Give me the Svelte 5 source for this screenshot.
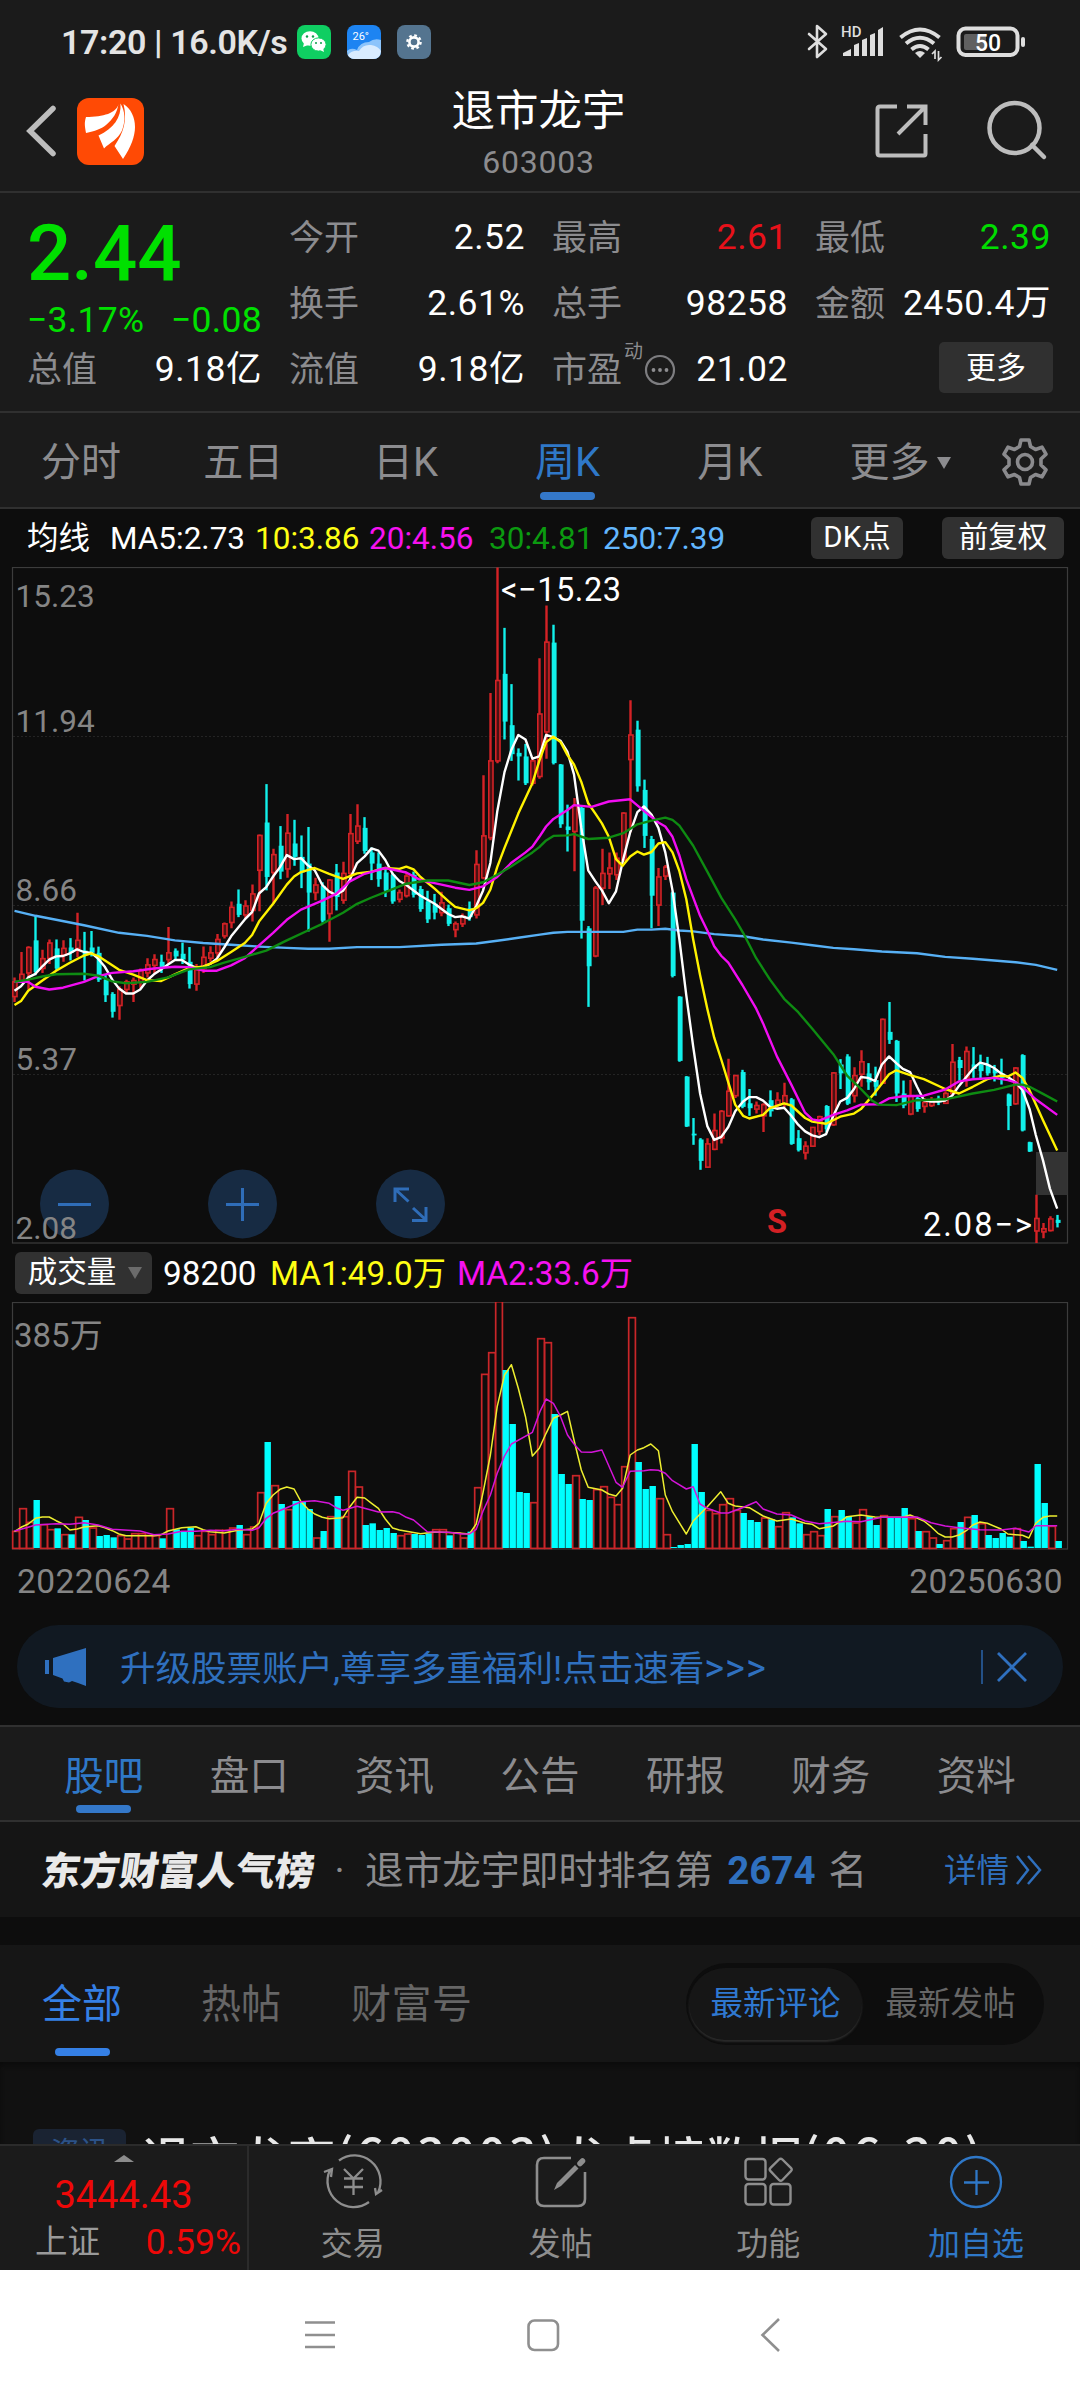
<script lang="ts">
  // Weekly candles: [high, body top, body bottom, low, rising]
  const candles: number[][] = [
    [935,945,978,990,1],[878,928,942,942,1],[865,868,925,962,1],[797,852,923,930,0],[873,893,915,925,1],
    [850,858,892,905,1],[850,870,915,920,0],[852,870,885,900,1],[847,868,880,897,0],[790,852,870,890,1],
    [833,875,885,942,0],[831,868,880,888,0],[866,880,940,945,0],[930,940,975,990,0],[968,972,1012,1025,0],
    [955,962,998,1030,1],[940,945,962,970,1],[935,942,950,990,1],[915,920,945,960,1],[892,907,925,935,1],
    [883,895,908,925,1],[884,900,912,925,0],[822,880,895,905,1],[870,875,888,897,0],[857,882,895,905,0],
    [867,900,950,960,0],[905,918,950,965,1],[866,890,915,925,1],[865,880,892,900,1],[838,850,880,890,1],
    [812,815,842,848,1],[765,778,812,825,1],[738,770,795,800,0],[762,775,795,802,1],[727,748,785,810,1],
    [615,617,695,787,1],[502,588,710,740,0],[647,660,700,770,1],[596,640,698,715,0],[569,612,692,712,1],
    [582,635,665,685,0],[617,665,700,735,0],[598,680,745,832,0],[712,728,745,762,1],[722,730,808,812,0],
    [715,717,792,855,1],[681,700,755,785,0],[676,702,762,770,1],[569,613,702,712,1],[547,596,630,636,1],
    [576,600,652,658,0],[644,655,680,717,0],[655,680,715,732,0],[693,700,740,755,0],[700,705,765,770,0],
    [738,745,760,767,1],[700,708,752,756,1],[698,705,750,756,0],[730,737,782,788,0],[741,765,805,813,0],
    [748,770,790,805,0],[743,768,790,798,1],[772,780,815,820,0],[810,815,828,845,1],[792,798,815,822,1],
    [765,780,800,808,0],[650,682,795,803,1],[482,618,712,715,1],[298,450,622,628,1],[17,270,450,455,1],
    [152,255,362,402,0],[278,370,435,450,0],[422,432,440,494,0],[412,440,500,504,0],[445,450,500,505,1],
    [220,345,485,490,1],[102,184,385,445,1],[145,185,455,458,0],[457,458,592,600,0],[548,597,605,653,0],
    [533,550,608,697,1],[552,555,808,848,0],[820,825,910,1001,0],[730,735,887,890,1],[647,702,735,773,1],
    [655,690,703,737,1],[655,668,705,717,1],[565,567,672,675,1],[314,392,447,610,1],[360,380,507,519,0],
    [492,515,618,645,0],[618,625,752,825,0],[690,710,773,820,1],[683,688,708,717,1],[743,745,932,935,0],
    [977,978,1122,1124,0],[1156,1157,1269,1270,0],[1250,1285,1289,1310,0],[1295,1298,1346,1366,0],[1295,1308,1360,1362,1],
    [1240,1278,1320,1322,1],[1232,1235,1295,1307,1],[1117,1190,1245,1247,1],[1153,1155,1200,1205,1],[1142,1147,1225,1228,0],
    [1185,1217,1228,1245,0],[1213,1222,1230,1240,1],[1217,1220,1245,1281,1],[1188,1210,1235,1247,0],[1192,1210,1220,1228,1],
    [1171,1200,1218,1225,1],[1205,1208,1308,1310,0],[1277,1295,1322,1325,0],[1302,1313,1328,1343,1],[1270,1271,1313,1315,1],
    [1245,1247,1280,1288,1],[1221,1223,1275,1282,0],[1147,1149,1265,1268,1],[1118,1130,1150,1185,0],[1107,1112,1218,1221,0],
    [1136,1155,1200,1215,1],[1098,1124,1152,1180,1],[1127,1150,1170,1187,0],[1135,1165,1180,1200,0],[1027,1029,1172,1174,1],
    [990,1057,1075,1084,0],[1075,1077,1195,1214,0],[1166,1195,1222,1228,0],[1165,1200,1241,1244,1],[1198,1205,1230,1236,0],
    [1205,1215,1224,1238,1],[1203,1210,1222,1225,1],[1200,1205,1215,1221,0],[1190,1195,1217,1218,1],[1084,1125,1195,1200,1],
    [1113,1120,1138,1166,0],[1090,1101,1160,1180,1],[1091,1130,1140,1160,0],[1108,1130,1145,1163,0],[1113,1130,1150,1155,0],
    [1131,1140,1150,1168,0],[1117,1150,1160,1175,0],[1195,1197,1223,1277,0],[1136,1138,1218,1220,1],[1107,1109,1278,1280,0],
    [1303,1304,1325,1326,0],[1422,1475,1503,1530,1],[1485,1498,1505,1519,1],[1470,1476,1502,1504,1],[1467,1478,1485,1495,0],
  ];

  const volumes = [
    875,807,848,780,855,870,865,885,883,833,840,865,888,885,892,888,898,882,882,887,888,895,807,868,875,
    863,888,875,885,872,872,865,855,885,862,759,606,738,792,810,783,785,807,895,873,831,768,831,695,742,
    855,850,870,864,879,888,883,882,885,880,870,870,886,880,895,875,744,404,339,186,390,552,756,759,789,
    297,309,522,702,732,708,777,780,750,741,773,795,681,234,666,747,738,777,885,921,915,912,612,756,812,
    822,795,777,812,819,840,846,835,838,861,819,832,850,885,876,888,807,831,810,828,850,810,828,855,828,
    831,834,804,837,873,876,895,912,903,867,846,833,825,852,885,894,879,890,867,903,920,672,789,860,903,
  ];
  // Weeks whose volume bar is coloured against the candle body
  const flipped = new Set([11, 60, 106, 138, 146, 147]);

  const maLines = [
    { cls: 'blue', pts: '42,786 103,797 163,806 244,818 346,835 427,842 508,852 590,858 671,862 752,866 833,869 894,871 956,871 1037,867 1160,867 1282,862 1383,859 1444,853 1505,846 1568,839 1607,835 1648,833 1810,833 1851,828 1892,828 1932,826 1973,830 2013,832 2074,838 2158,843 2216,850 2298,857 2359,863 2420,869 2480,872 2561,877 2663,881 2745,889 2825,893 2949,901 3008,907 3070,918' },
    { cls: 'white', pts: '42,965 61,955 82,935 103,927 123,910 143,895 163,888 183,887 203,881 224,872 244,878 265,880 285,893 305,912 326,940 346,960 366,971 387,971 407,962 427,942 447,928 468,917 488,906 508,896 528,896 549,906 569,913 590,911 610,905 630,893 651,868 671,843 711,805 732,789 752,747 773,733 793,709 813,688 833,661 854,670 874,668 894,684 914,695 936,728 956,743 976,750 996,741 1016,716 1037,679 1059,664 1079,646 1099,651 1119,672 1140,703 1160,719 1180,728 1221,752 1262,770 1302,793 1322,800 1342,798 1363,803 1383,775 1403,740 1424,678 1444,564 1465,475 1485,425 1505,392 1526,402 1546,445 1566,440 1586,392 1607,397 1628,405 1648,430 1667,480 1688,600 1708,695 1729,720 1748,740 1768,769 1789,742 1810,670 1830,610 1851,565 1870,552 1892,570 1912,600 1932,655 1953,740 1973,850 1993,975 2013,1090 2033,1195 2054,1268 2074,1299 2095,1292 2115,1270 2135,1235 2158,1213 2176,1203 2196,1203 2216,1211 2236,1225 2256,1229 2277,1227 2298,1245 2318,1265 2338,1280 2359,1289 2379,1293 2399,1286 2420,1245 2440,1213 2460,1205 2480,1185 2500,1158 2521,1160 2541,1167 2561,1130 2582,1112 2603,1127 2622,1140 2643,1147 2663,1180 2683,1210 2704,1213 2724,1213 2745,1211 2765,1200 2785,1178 2806,1158 2825,1140 2846,1126 2867,1130 2887,1138 2907,1150 2927,1158 2949,1170 2969,1187 2990,1230 3008,1288 3029,1345 3049,1408 3070,1453' },
    { cls: 'yellow', pts: '42,997 61,988 82,965 123,942 163,920 203,902 244,886 265,881 285,887 305,897 346,918 387,929 427,941 468,943 508,928 549,914 590,911 630,898 671,878 711,858 732,840 752,810 793,770 833,727 854,709 874,699 914,690 956,703 996,714 1037,702 1079,698 1119,690 1160,692 1180,687 1201,693 1221,710 1262,736 1302,764 1322,777 1363,785 1383,780 1403,768 1424,738 1444,688 1465,645 1505,568 1546,500 1566,450 1586,408 1607,396 1628,408 1648,437 1667,458 1688,497 1708,545 1729,568 1748,590 1768,620 1789,670 1808,685 1830,664 1851,653 1870,660 1892,654 1912,635 1932,632 1953,655 1973,697 1993,760 2013,850 2033,930 2054,1005 2074,1070 2095,1120 2115,1170 2135,1220 2158,1245 2176,1251 2216,1243 2236,1228 2277,1217 2298,1222 2338,1250 2359,1258 2399,1263 2440,1247 2480,1240 2500,1230 2541,1193 2582,1152 2603,1143 2643,1154 2683,1163 2745,1185 2785,1195 2825,1180 2867,1163 2907,1155 2927,1157 2949,1148 2969,1160 2990,1188 3029,1255 3070,1323' },
    { cls: 'magenta', pts: '42,945 82,945 103,956 143,962 183,958 244,945 285,932 326,925 387,921 447,915 508,911 549,912 590,920 630,920 671,908 711,892 752,863 793,835 833,806 874,783 936,763 976,748 1016,720 1059,703 1119,690 1180,700 1221,717 1282,727 1322,734 1363,739 1403,731 1444,710 1485,678 1526,655 1546,642 1566,620 1586,597 1607,580 1648,560 1667,549 1718,553 1768,541 1830,536 1870,562 1912,588 1932,597 1953,620 1973,662 1993,715 2033,797 2054,830 2074,865 2095,887 2115,902 2156,952 2196,1005 2216,1038 2256,1112 2298,1175 2338,1238 2359,1253 2379,1256 2420,1243 2460,1233 2500,1220 2551,1219 2582,1206 2622,1201 2683,1200 2745,1186 2785,1168 2825,1163 2887,1160 2927,1165 2949,1170 2969,1180 3008,1208 3070,1243' },
    { cls: 'green', pts: '42,945 82,940 123,933 163,928 244,927 285,931 326,944 366,948 427,945 488,935 549,917 610,912 651,902 711,889 773,875 833,852 894,830 936,815 996,790 1037,770 1079,756 1119,744 1180,725 1241,718 1302,718 1363,728 1403,722 1444,705 1485,686 1546,655 1566,643 1586,628 1607,618 1648,617 1667,614 1708,625 1768,622 1810,612 1851,592 1892,584 1932,577 1953,582 1973,595 2013,640 2054,698 2095,757 2135,805 2158,835 2196,892 2236,940 2277,983 2318,1013 2359,1050 2420,1107 2460,1155 2500,1185 2531,1210 2551,1220 2603,1221 2663,1210 2745,1208 2825,1195 2887,1187 2949,1175 2969,1175 2990,1180 3029,1196 3070,1213' },
  ];

  const volLines = [
    { cls: 'vyellow', pts: '42,875 61,862 82,852 103,835 123,831 143,831 163,842 183,852 203,870 224,867 244,861 285,857 305,863 326,872 346,882 366,887 447,887 468,884 488,873 528,863 569,860 590,869 610,875 651,879 691,871 732,867 752,850 773,790 793,765 813,748 833,741 854,747 874,785 894,807 914,822 936,832 956,836 996,833 1016,800 1037,772 1059,774 1079,790 1099,805 1119,837 1140,864 1160,870 1221,881 1262,876 1322,878 1363,882 1383,852 1403,757 1424,645 1444,500 1465,405 1485,374 1505,445 1526,530 1546,648 1566,625 1586,580 1607,535 1628,525 1648,514 1667,600 1688,690 1708,742 1748,750 1768,762 1789,768 1808,745 1830,645 1851,630 1870,623 1890,612 1912,632 1932,765 1953,815 1993,882 2013,843 2054,800 2093,755 2115,790 2135,798 2176,803 2216,828 2256,843 2298,837 2338,850 2359,853 2379,866 2420,858 2440,845 2460,830 2500,825 2541,831 2622,832 2643,825 2683,843 2704,860 2724,880 2745,891 2765,891 2785,885 2806,872 2825,855 2846,846 2867,850 2907,867 2927,882 2969,886 2988,894 3008,850 3029,832 3049,828 3070,828' },
    { cls: 'vmagenta', pts: '42,873 82,862 103,855 163,851 203,853 244,848 285,855 326,868 407,873 447,884 488,882 528,874 569,874 610,871 651,872 691,868 732,871 752,863 773,835 793,820 833,803 874,785 914,782 956,790 976,803 996,811 1037,799 1099,816 1140,815 1160,820 1180,832 1201,840 1241,875 1302,877 1342,882 1363,882 1383,868 1403,813 1424,765 1444,700 1465,648 1485,612 1546,577 1568,515 1586,477 1607,490 1628,530 1648,585 1667,612 1688,636 1718,637 1748,630 1789,727 1808,742 1830,694 1870,692 1890,689 1912,691 1932,700 1953,722 1993,747 2013,740 2033,792 2054,805 2093,819 2115,819 2156,803 2196,785 2216,807 2256,822 2298,825 2338,843 2379,851 2460,844 2500,845 2561,832 2663,831 2704,848 2745,858 2785,863 2846,869 2907,870 2949,865 2988,876 3008,857 3070,857' },
  ];

  const xOf = (i: number) => 14.5 + i * 7;
  const yOf = (v: number) => 560 + v / 2.24;
  const yVol = (v: number) => 1240 + v / 3;
  const toPath = (pts: string, y: (v: number) => number) =>
    pts.split(' ').map((p) => {
      const [a, b] = p.split(',').map(Number);
      return `${(a / 2.904).toFixed(1)},${y(b).toFixed(1)}`;
    }).join(' ');

  const quotes = [
    ['今开', '2.52', ''], ['最高', '2.61', 'up'], ['最低', '2.39', 'down'],
    ['换手', '2.61%', ''], ['总手', '98258', ''], ['金额', '2450.4万', ''],
  ];
  const periods = ['分时', '五日', '日K', '周K', '月K'];
  const sections = ['股吧', '盘口', '资讯', '公告', '研报', '财务', '资料'];
</script>

<div class="screen">
  <div class="status">
    <span class="clock">17:20 | 16.0K/s</span>
    <svg class="apps" width="136" height="36" viewBox="0 0 136 36">
      <rect x="1" y="1" width="34" height="34" rx="8" fill="#0fce62" />
      <ellipse cx="14" cy="14.500" rx="8.500" ry="7.300" fill="#fff" />
      <path d="M8 19l-1 4 5-2z" fill="#fff" />
      <ellipse cx="22.500" cy="20.500" rx="7.600" ry="6.600" fill="#fff" stroke="#0fce62" stroke-width="1" />
      <path d="M24 26l4 2-1-4z" fill="#fff" />
      <g fill="#0a9d49"><circle cx="11" cy="12.500" r="1.200" /><circle cx="17" cy="12.500" r="1.200" /><circle cx="20" cy="19" r="1" /><circle cx="25" cy="19" r="1" /></g>
      <rect x="51" y="1" width="34" height="34" rx="8" fill="#1d84f2" />
      <path d="M51 27q4-4 10-1 3-8 12-8 5-4 12-2v11q0 8-8 8H59q-8 0-8-8z" fill="#8cc4fb" />
      <path d="M52 31q4-5 11-4 4-7 12-6 7 1 10 6-1 8-8 8H59q-5 0-7-4z" fill="#d9ecff" />
      <text x="56.500" y="16" font-size="11" fill="#fff">26°</text>
      <rect x="101" y="1" width="34" height="34" rx="8" fill="#54748f" />
      <g fill="none" stroke="#fff"><circle cx="118" cy="18" r="4.600" stroke-width="2.600" /><circle cx="118" cy="18" r="6.600" stroke-width="2.400" stroke-dasharray="2.700 2.480" /></g>
    </svg>
    <svg class="signals" width="222" height="40" viewBox="804 22 222 40">
      <path d="M809 34l17 15-9 8V26l9 8-17 15" fill="none" stroke="#dedede" stroke-width="2.600" stroke-linejoin="round" stroke-linecap="round" />
      <text x="841" y="37" font-size="15" font-weight="500" fill="#dedede">HD</text>
      <path d="M843 56v-3l8-4v7zM854 56V45l5-2v13zM862 56V40l5-2v18zM870 56V35l5-2v23zM878 56V30l5-3v29z" fill="#dedede" />
      <g fill="none" stroke="#dedede" stroke-width="4"><path d="M900.500 37.500q19.500-16 39 0" /><path d="M906 43.500q14-11.500 28 0" /><path d="M911.500 49.500q8.500-7 17 0" /></g>
      <path d="M915 53q5-4 10 0l-5 5z" fill="#dedede" />
      <path d="M932 54l3-3v8M938.500 51v9l3-3" fill="none" stroke="#dedede" stroke-width="1.700" />
      <rect x="958.500" y="28.500" width="59" height="26.500" rx="7" fill="none" stroke="#dedede" stroke-width="4" />
      <rect x="964" y="34" width="22" height="16" rx="2" fill="#606060" />
      <rect x="1021" y="37" width="4" height="10" rx="2" fill="#dedede" />
      <text x="975" y="50.500" font-size="23" font-weight="500" fill="#fff">50</text>
    </svg>
  </div>

  <header class="head">
    <svg class="back" width="120" height="76" viewBox="24 93 120 76">
      <path d="M53 108.500L30 131l23 22.500" fill="none" stroke="#bdbdbd" stroke-width="5.500" stroke-linecap="round" />
      <rect x="77" y="98" width="67" height="67" rx="12" fill="#ff4a05" />
      <path d="M118.500 104c-2 9-15 13-32.500 13-2 6-1 10 0 16 9-2 15-4 20-8 7-6 11-12 12.500-21z" fill="#fff" />
      <path d="M120.500 103.500c1 14-7 25-22 32l5.500 13c6-6 14-9 18-18 4-11 3-19-1.500-27z" fill="#fff" />
      <path d="M123.500 104c4 16 0 29-9 42l8.500 13c8-12 12-23 12-32 0-10-4-18-11.500-23z" fill="#fff" />
    </svg>
    <div class="title">
      <h1>退市龙宇</h1>
      <p>603003</p>
    </div>
    <svg class="tools" width="184" height="70" viewBox="868 96 184 70" fill="none" stroke="#bdbdbd" stroke-width="4.500">
      <path d="M897 106.500H880q-2.500 0-2.500 2.500v44q0 2.500 2.500 2.500h44q1.500 0 1.500-2V134M907 106.500h18.500V125M925 107l-27 27" stroke-width="4" />
      <circle cx="1014.500" cy="128" r="25" />
      <path d="M1032 145l12 12" stroke-linecap="round" />
    </svg>
  </header>

  <section class="quote">
    <div class="main">
      <div class="price">2.44</div>
      <div class="chg"><span>−3.17%</span><span>−0.08</span></div>
      <div class="cell"><span class="k">总值</span><span class="v">9.18亿</span></div>
    </div>
    <div class="grid">
      {#each quotes as [k, v, tone]}
        <div class="cell"><span class="k">{k}</span><span class="v {tone}">{v}</span></div>
      {/each}
      <div class="cell"><span class="k">流值</span><span class="v">9.18亿</span></div>
      <div class="cell pe">
        <span class="k">市盈</span><sup>动</sup>
        <svg width="32" height="32" viewBox="0 0 32 32"><circle cx="16" cy="16" r="14" fill="none" stroke="#7d7d80" stroke-width="2.200" /><g fill="#8d8d90"><circle cx="9.500" cy="16" r="1.900" /><circle cx="16" cy="16" r="1.900" /><circle cx="22.500" cy="16" r="1.900" /></g></svg>
        <span class="v">21.02</span>
      </div>
      <div class="cell end"><button class="more">更多</button></div>
    </div>
  </section>

  <nav class="periods">
    {#each periods as p}
      <span class="tab" class:on={p === '周K'}>{p}</span>
    {/each}
    <span class="tab dd">更多<i></i></span>
    <svg class="gear" width="50" height="50" viewBox="0 0 50 50" fill="none" stroke="#8a8a8d" stroke-width="3.600" stroke-linejoin="round">
      <path d="M21 3h8l1.500 6.500 5 3 6.500-2.300 4 7-5 4.800v6l5 4.800-4 7-6.500-2.300-5 3L29 47h-8l-1.500-6.500-5-3L8 39.800l-4-7L9 28v-6l-5-4.800 4-7 6.500 2.300 5-3z" />
      <circle cx="25" cy="25" r="7.500" />
    </svg>
  </nav>

  <div class="legend">
    <b class="l0">均线</b>
    <span class="l1">MA5:2.73</span>
    <span class="l2">10:3.86</span>
    <span class="l3">20:4.56</span>
    <span class="l4">30:4.81</span>
    <span class="l5">250:7.39</span>
    <button class="chip dk">DK点</button>
    <button class="chip">前复权</button>
  </div>

  <svg class="chart" width="1080" height="677" viewBox="0 567 1080 677">
    <g class="frame">
      <rect x="12.500" y="567.500" width="1055" height="675.500" />
      {#each [736.5, 905.5, 1074.5] as y}<line x1="13" x2="1067" y1={y} y2={y} stroke-dasharray="2 2" />{/each}
    </g>
    <rect x="1036" y="1152" width="31.500" height="43" fill="#333" />
    {#each candles as [h, t, b, l, up], i}
      {#if up}
        <path d="M{xOf(i)} {yOf(h)}V{yOf(t)}M{xOf(i)} {yOf(b)}V{yOf(l)}" stroke="#d42226" stroke-width="2.400" />
        <rect x={xOf(i) - 1.7} y={yOf(t)} width="4.200" height={Math.max(1.5, yOf(b) - yOf(t))} fill="#4b1113" stroke="#d42226" stroke-width="1.600" />
      {:else}
        <path d="M{xOf(i)} {yOf(h)}V{yOf(l)}" stroke="#12f0ea" stroke-width="2.400" />
        <rect x={xOf(i) - 1.8} y={yOf(t)} width="4.900" height={Math.max(1.5, yOf(b) - yOf(t))} fill="#12f0ea" />
      {/if}
    {/each}
    {#each maLines as m}
      <polyline class="ma {m.cls}" points={toPath(m.pts, yOf)} />
    {/each}
    <g class="mark">
      <text x="501" y="601" textLength="120">&lt;−15.23</text>
      <text x="923" y="1236" textLength="109">2.08−&gt;</text>
      <text class="sell" x="767" y="1233">S</text>
    </g>
    <g fill="#1e3f68" fill-opacity="0.600">
      <circle cx="74.500" cy="1204" r="34.500" /><circle cx="242.500" cy="1204" r="34.500" /><circle cx="410.500" cy="1204" r="34.500" />
    </g>
    <g fill="none" stroke="#2f6db8" stroke-width="3">
      <path d="M58 1204.500h33M226 1204.500h33M242.500 1188v33" />
      <path d="M395 1202v-13h14M395.500 1189.500l13 12M426 1207v13.500h-14M426 1220l-13-12" />
    </g>
    <g class="axis">
      <text x="15.500" y="607">15.23</text>
      <text x="15.500" y="731.500">11.94</text>
      <text x="15.500" y="901">8.66</text>
      <text x="15.500" y="1070">5.37</text>
      <text x="15.500" y="1239">2.08</text>
    </g>
  </svg>

  <div class="legend vol">
    <button class="chip pick">成交量<i></i></button>
    <span class="v0">98200</span>
    <span class="l2 v1">MA1:49.0万</span>
    <span class="l3">MA2:33.6万</span>
  </div>

  <svg class="chart" width="1080" height="248" viewBox="0 1302 1080 248">
    <g class="frame"><rect x="12.500" y="1302.500" width="1055" height="246.500" /></g>
    <text class="vlabel" x="14" y="1347">385万</text>
    {#each volumes as v, i}
      {#if !!candles[i][4] !== flipped.has(i)}
        <rect x={xOf(i) - 1.8} y={yVol(v) - 0.3} width="6.700" height={1548.7 - yVol(v)} fill="#0e0c0c" stroke="#c92629" stroke-width="1.700" />
      {:else}
        <rect x={xOf(i) - 2} y={yVol(v)} width="6.400" height={Math.max(1, 1548 - yVol(v))} fill="#00ffff" />
      {/if}
    {/each}
    {#each volLines as m}
      <polyline class="ma {m.cls}" points={toPath(m.pts, yVol)} />
    {/each}
  </svg>

  <div class="dates"><span>20220624</span><span>20250630</span></div>

  <div class="banner">
    <svg width="44" height="40" viewBox="0 0 44 40" fill="#2f70bf"><path d="M1 13h4v14H1zM9 11L42 1v38l-8-3-6-2-3 1.500-5-1-1.500-3L9 28z" /></svg>
    <span>升级股票账户,尊享多重福利!点击速看<b>&gt;&gt;&gt;</b></span>
    <svg class="close" width="50" height="40" viewBox="0 0 50 40" fill="none" stroke="#2f70bf"><path d="M3 3v34" stroke-width="1.300" /><path d="M19 6l28 28M47 6L19 34" stroke-width="2.800" /></svg>
  </div>

  <nav class="sections">
    {#each sections as s, i}
      <span class="tab" class:on={i === 0}>{s}</span>
    {/each}
  </nav>

  <div class="rank">
    <strong>东方财富人气榜</strong>
    <span class="dot">·</span>
    <span class="txt">退市龙宇即时排名第</span>
    <em>2674</em>
    <span class="txt">名</span>
    <span class="detail">详情</span>
    <svg width="28" height="32" viewBox="0 0 28 32" fill="none" stroke="#2f70bf" stroke-width="2.500"><path d="M2 2l11 14L2 30M13 2l12 14-12 14" /></svg>
  </div>

  <div class="forum">
    <span class="f on">全部</span>
    <span class="f f2">热帖</span>
    <span class="f f3">财富号</span>
    <div class="toggle"><span class="sel">最新评论</span><span>最新发帖</span></div>
  </div>

  <article class="post">
    <span class="tag">资讯</span>
    <h2>退市龙宇<span>(603003)</span>龙虎榜数据<span>(06-30)</span></h2>
  </article>

  <footer class="dock">
    <div class="index">
      <i></i>
      <div class="pt">3444.43</div>
      <div class="row"><span>上证</span><b>0.59%</b></div>
    </div>
    <div class="act">
      <svg width="64" height="56" viewBox="0 0 64 56" fill="none" stroke="#8e8e8e" stroke-width="2.300"><path d="M18 6.500A26 26 0 0 1 57 38.500M48 48A26 26 0 0 1 9 16M3 18l8-3-1 8M61 36l-6 4-1-6" /><path d="M23 15l9.500 9.500L42 15M23 24.500h19M23 33h19M32.500 24v17" /></svg>
      <span>交易</span>
    </div>
    <div class="act">
      <svg width="64" height="56" viewBox="0 0 64 56" fill="none" stroke="#8e8e8e" stroke-width="2.600"><path d="M42 4H15q-7 0-7 7v34q0 7 7 7h34q7 0 7-7V18" /><path d="M25 36l3-7L46 11l3.500 3.500L32 32z" fill="#8e8e8e" stroke="none" /><path d="M51 9.500l2.500-2.500" stroke-width="5.500" stroke-linecap="round" /></svg>
      <span>发帖</span>
    </div>
    <div class="act">
      <svg width="64" height="56" viewBox="0 0 64 56" fill="none" stroke="#8e8e8e" stroke-width="2.400"><rect x="9.500" y="5" width="20" height="20.500" rx="3" /><rect x="9.500" y="30" width="20" height="20.500" rx="3" /><rect x="34.500" y="30" width="20" height="20.500" rx="3" /><path d="M43 5.500q1.700-1.700 3.400 0l8.500 8.300q1.700 1.700 0 3.400L46.400 26q-1.700 1.700-3.400 0l-8.500-8.800q-1.700-1.700 0-3.400z" /></svg>
      <span>功能</span>
    </div>
    <div class="act add">
      <svg width="64" height="56" viewBox="0 0 64 56" fill="none" stroke="#2f78c8" stroke-width="2.300"><circle cx="32" cy="28" r="25" /><path d="M20 28.500h25M32.500 16v25" /></svg>
      <span>加自选</span>
    </div>
  </footer>

  <div class="sys">
    <svg width="480" height="36" viewBox="302 2317 480 36" fill="none" stroke="#8f8f8f" stroke-width="2.600">
      <path d="M305 2322.500h30M305 2335h30M305 2347h30" />
      <rect x="528.500" y="2320.500" width="29.500" height="29.500" rx="6" />
      <path d="M779 2319l-16.500 16 16.500 16" />
    </svg>
  </div>
</div>

<style>
  :global(body) { background: #0d0d0d; }
  .screen {
    width: 1080px; height: 2400px; overflow: hidden; display: flex; flex-direction: column;
    background: #0d0d0d; color: #fff; font-family: Roboto, "Noto Sans CJK SC", sans-serif; line-height: 1;
  }
  .screen > * { flex: none; box-sizing: border-box; }
  button { font: inherit; color: inherit; border: 0; padding: 0; margin: 0; }
  h1, h2, p { margin: 0; font-weight: 400; }
  svg { display: block; }

  .status { height: 84px; background: #1b1b1b; display: flex; align-items: center; padding: 0 54px 0 61px; }
  .clock { font-size: 34px; font-weight: 600; color: #e4e4e4; width: 235px; white-space: nowrap; letter-spacing: -0.400px; }
  .signals { margin-left: auto; }

  .head { height: 109px; background: #1b1b1b; border-bottom: 2px solid #303030; display: flex; justify-content: space-between; align-items: flex-start; padding: 9px 28px 0 24px; }
  .title { text-align: center; margin: -11px -65px 0 0; }
  .title h1 { font-size: 43.500px; line-height: 60px; }
  .title p { font-size: 32px; line-height: 36px; color: #8c8c8f; letter-spacing: 0.800px; padding-top: 2px; }
  .tools { margin-top: 3px; }

  .quote { height: 220px; background: #1b1b1b; border-bottom: 2px solid #303030; display: flex; gap: 27px; padding: 12px 29px 0 27px; }
  .main { width: 235px; display: flex; flex-direction: column; }
  .price { height: 98px; line-height: 98px; font-size: 78px; font-weight: 500; color: #00e000; }
  .chg { height: 34px; line-height: 34px; display: flex; justify-content: space-between; font-size: 35.500px; color: #00e000; letter-spacing: 0.300px; }
  .grid { flex: 1; display: grid; grid-template-columns: repeat(3, 1fr); column-gap: 27px; grid-auto-rows: 66px; }
  .cell { display: flex; align-items: center; justify-content: space-between; height: 66px; font-size: 35.500px; white-space: nowrap; }
  .v { letter-spacing: 0.500px; }
  .k { color: #8c8c8f; font-size: 35px; }
  .up { color: #e8111a; }
  .down { color: #00dd00; }
  .pe sup { font-size: 19px; line-height: 20px; color: #8c8c8f; align-self: flex-start; margin: 5px 1px 0 2px; }
  .pe .v { margin-left: auto; }
  .end { justify-content: flex-end; }
  .more { width: 114px; height: 51px; border-radius: 5px; background: #303030; font-size: 30px; margin: -5px -2px 0 0; }

  .periods { height: 96px; background: #1b1b1b; border-bottom: 2px solid #303030; display: flex; align-items: stretch; }
  .tab { width: 162.200px; display: flex; align-items: center; justify-content: center; font-size: 40px; color: #8c8c8f; position: relative; box-sizing: border-box; }
  .tab.on { color: #2f78c8; }
  .tab.on::after { content: ""; position: absolute; bottom: 9px; left: calc(50% - 27.500px); width: 55px; height: 8px; border-radius: 4px; background: #3478c9; }
  .periods .tab { height: 96px; padding-top: 4px; }
  .tab.dd { width: 179px; }
  .dd i { border: 7px solid transparent; border-top: 12px solid #8c8c8f; border-bottom: 0; margin-left: 8px; }
  .gear { margin: 24px 0 0 10px; }

  .legend { height: 58px; display: flex; align-items: center; padding: 2px 16px 0 27px; font-size: 31.500px; white-space: nowrap; }
  .legend b { font-weight: 400; }
  .l0 { width: 83px; }
  .l1 { width: 145px; }
  .l2 { color: #ffff14; width: 114px; }
  .l3 { color: #f711f0; width: 120px; }
  .l4 { color: #0b9a10; width: 114px; }
  .l5 { color: #63b7ff; }
  .chip { height: 42px; border-radius: 6px; background: #313131; font-size: 29.500px; width: 122px; display: flex; align-items: center; justify-content: center; margin-top: -2px; }
  .chip.dk { width: 92px; margin: -2px 39px 0 auto; }
  .vol { height: 58px; padding-left: 15px; font-size: 33.300px; }
  .chip.pick { width: 137px; gap: 12px; padding-left: 3px; }
  .pick i { border: 7px solid transparent; border-top: 12px solid #6b6b6b; border-bottom: 0; }
  .v0 { width: 107px; margin-left: 11px; }
  .v1 { width: 187px; }

  .frame { fill: none; stroke: #3c3c3c; stroke-width: 1.200; }
  .frame line { stroke: #242424; }
  .axis text { font-size: 31.500px; }
  .mark text { font-size: 32.500px; fill: #fff; }
  .axis text, .vlabel { fill: #858585; }
  .mark .sell { fill: #d32024; font-weight: 700; }
  .vlabel { font-size: 33px; }
  .ma { fill: none; stroke-width: 2.400; stroke-linejoin: round; }
  .white { stroke: #fff; }
  .yellow { stroke: #fff200; }
  .magenta { stroke: #f20df2; }
  .green { stroke: #0e8b12; }
  .blue { stroke: #57b0f5; }
  .vyellow { stroke: #eeee30; stroke-width: 1.500; }
  .vmagenta { stroke: #d414d8; stroke-width: 1.500; }

  .dates { height: 75px; display: flex; justify-content: space-between; align-items: center; padding: 0 17px 12px; font-size: 33.500px; color: #858585; letter-spacing: 0.400px; }

  .banner { height: 83px; margin: 0 17px; border-radius: 42px; background: #111922; color: #2f70bf; display: flex; align-items: center; padding: 0 34px 0 27px; font-size: 35.500px; }
  .banner span { margin: 3px 0 0 32px; white-space: nowrap; }
  .banner b { font-weight: 400; letter-spacing: 1px; font-size: 38px; }
  .close { margin-left: auto; }

  .sections { height: 97px; margin-top: 17px; background: #1b1b1b; border-top: 2px solid #303030; border-bottom: 2px solid #303030; display: flex; padding: 0 31px; }
  .sections .tab { flex: 1; width: auto; font-size: 39.500px; padding-top: 6px; }
  .sections .tab.on::after { bottom: 7px; }

  .rank { height: 95px; background: #151515; display: flex; align-items: center; padding: 3px 37px 0 42px; font-size: 38.700px; white-space: nowrap; color: #8c8c8f; }
  .rank strong { font-weight: 900; color: #e9e9e9; font-size: 38.900px; transform: skewX(-8deg); width: 272px; padding-top: 2px; }
  .dot { width: 51px; text-align: center; }
  .rank em { font-style: normal; font-weight: 700; color: #2f70bf; font-size: 38.500px; margin: 0 13px 0 14px; }
  .detail { color: #2f70bf; font-size: 32.500px; margin: 0 6px 0 auto; }
  .rank svg { margin-top: -3px; }

  .forum { height: 117px; margin-top: 28px; background: #161616; display: flex; align-items: center; padding: 0 37px 0 42px; font-size: 40px; color: #666; }
  .f { position: relative; height: 117px; line-height: 120px; }
  .f.on { color: #3580e6; }
  .f.on::after { content: ""; position: absolute; bottom: 6px; left: 13px; width: 55px; height: 8px; border-radius: 4px; background: #3580e6; }
  .f2 { margin-left: 79px; }
  .f3 { margin-left: 70px; letter-spacing: 0.500px; }
  .toggle { margin-left: auto; display: flex; box-sizing: border-box; width: 358px; height: 82px; padding: 5px 5px 5px 3px; margin-right: -1px; border-radius: 41px; background: #0d0d0d; font-size: 32.500px; }
  .toggle span { flex: 1; display: flex; align-items: center; justify-content: center; padding-top: 2px; }
  .toggle .sel { flex: none; width: 173px; border-radius: 36px; background: #161616; color: #2f78d0; box-shadow: 0 2px 2px #2b2b2b; }

  .post { height: 82px; background: #111; overflow: hidden; display: flex; align-items: flex-start; padding: 0 33px; box-shadow: inset 0 4px 4px #0c0c0c; }
  .tag { margin-top: 67px; width: 93px; height: 52px; flex: none; border-radius: 6px; background: #1a2332; color: #2c5288; font-size: 29px; line-height: 48px; text-align: center; }
  .post h2 { font-size: 48.500px; line-height: 60px; margin: 65px 0 0 16px; white-space: nowrap; font-weight: 500; color: #e8e8e8; font-family: "Noto Sans CJK SC", sans-serif; }
  .post h2 span { letter-spacing: 2.900px; position: relative; top: -4px; }

  .dock { height: 126px; background: #1b1b1b; border-top: 2px solid #2b2b2b; display: flex; }
  .index { width: 249px; box-sizing: border-box; border-right: 2px solid #2b2b2b; display: flex; flex-direction: column; align-items: center; }
  .index i { border: 10px solid transparent; border-bottom: 7px solid #8c8c8c; border-top: 0; margin-top: 9px; }
  .pt { font-size: 38px; line-height: 44px; color: #ee0808; margin-top: 11px; }
  .row { width: 206px; display: flex; justify-content: space-between; align-items: center; font-size: 32.500px; line-height: 50px; color: #9a9a9a; margin: 0 2px 0 31px; }
  .row b { font-weight: 400; color: #ee0808; font-size: 35.500px; }
  .act { flex: 1; display: flex; flex-direction: column; align-items: center; padding-top: 8px; font-size: 32px; color: #8e8e8e; }
  .act span { line-height: 50px; margin-top: 9px; }
  .act.add { color: #2f78c8; }

  .sys { height: 130px; background: #fff; padding: 47px 0 0 302px; }
</style>
